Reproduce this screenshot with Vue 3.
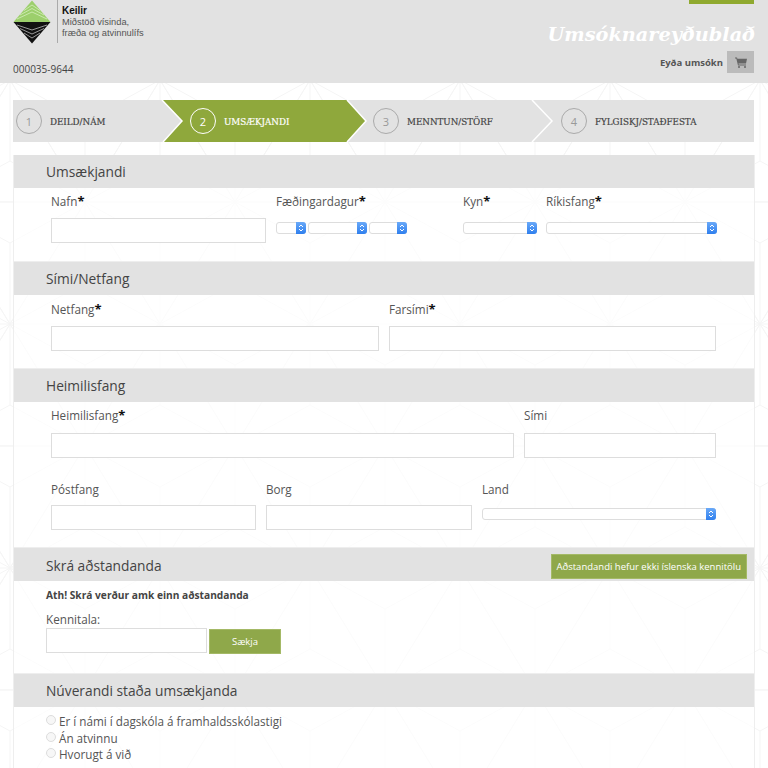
<template>
  <div class="page">
    <svg class="bg-pattern" width="768" height="768" aria-hidden="true">
      <defs>
        <pattern id="stars" width="150" height="244" patternUnits="userSpaceOnUse" x="85" y="-42">
          <g stroke="#f5f5f5" stroke-width="1" fill="none">
            <g v-for="c in starCentres" :key="c[0] + '-' + c[1]">
              <line v-for="p in starTargets" :key="p[0] + '-' + p[1]" :x1="c[0]" :y1="c[1]" :x2="c[0] + p[0]" :y2="c[1] + p[1]" />
            </g>
          </g>
        </pattern>
      </defs>
      <rect width="768" height="768" fill="url(#stars)" />
    </svg>

    <header class="top">
      <div class="top-left">
        <div class="brand">
          <svg class="logo" width="38" height="44" viewBox="0 0 38 44">
            <polygon points="0.5,22 19,0.5 37.5,22" fill="#9ccf6c" />
            <g fill="none" stroke="#d6efbd" stroke-width="0.8">
              <polyline points="4,19 19,12 34,19" />
              <polyline points="7,15 19,8.500 31,15" />
              <polyline points="11,10.500 19,5 27,10.500" />
            </g>
            <polygon points="0.5,22 19,43.500 37.500,22" fill="#111" />
            <g fill="none" stroke="#bbb" stroke-width="0.8">
              <polyline points="4,25 19,30 34,25" />
              <polyline points="7,28.500 19,34 31,28.500" />
              <polyline points="11,33 19,38 27,33" />
            </g>
          </svg>
          <div class="brand-text">
            <strong>Keilir</strong>
            <span>Miðstöð vísinda,</span>
            <span>fræða og atvinnulífs</span>
          </div>
        </div>
        <div class="number">000035-9644</div>
      </div>
      <div class="top-right">
        <div class="top-tab"></div>
        <h1>Umsóknareyðublað</h1>
        <div class="delete-row">
          <span>Eyða umsókn</span>
          <button class="cart" type="button">
            <svg width="12" height="11" viewBox="0 0 12 11">
              <path d="M0 .5h2l.4 1.300H12l-1 4.700H3.500l.2 1H11v1H3L1.300 1.500H0z" fill="#666" />
              <circle cx="4" cy="10" r="1" fill="#666" />
              <circle cx="10" cy="10" r="1" fill="#666" />
            </svg>
          </button>
        </div>
      </div>
    </header>

    <nav class="steps">
      <svg class="steps-art" width="741" height="42" viewBox="0 0 741 42">
        <polygon points="149,0 334,0 353,21 334,42 150,42 169,21" fill="#8fa83c" />
        <g fill="none" stroke="#fff" stroke-width="1.500">
          <polyline points="149,0 169,21 150,42" />
          <polyline points="334,0 353,21 334,42" />
          <polyline points="519,0 539,21 519,42" />
        </g>
      </svg>
      <div v-for="(s, i) in steps" :key="s" class="step" :class="{ active: i === 1 }">
        <span class="circle">{{ i + 1 }}</span>
        <span class="step-label">{{ s }}</span>
      </div>
    </nav>

    <main class="card">
      <section>
        <h2>Umsækjandi</h2>
        <div class="fields row-person">
          <div class="field">
            <label>Nafn<b>*</b></label>
            <input type="text" />
          </div>
          <div class="field">
            <label>Fæðingardagur<b>*</b></label>
            <div class="select-row dates">
              <div class="sel"><i><svg width="6" height="8" viewBox="0 0 6 8"><path d="M1 3l2-2 2 2M1 5l2 2 2-2" fill="none" stroke="#fff" /></svg></i></div>
              <div class="sel"><i><svg width="6" height="8" viewBox="0 0 6 8"><path d="M1 3l2-2 2 2M1 5l2 2 2-2" fill="none" stroke="#fff" /></svg></i></div>
              <div class="sel"><i><svg width="6" height="8" viewBox="0 0 6 8"><path d="M1 3l2-2 2 2M1 5l2 2 2-2" fill="none" stroke="#fff" /></svg></i></div>
            </div>
          </div>
          <div class="field">
            <label>Kyn<b>*</b></label>
            <div class="select-row">
              <div class="sel kyn"><i><svg width="6" height="8" viewBox="0 0 6 8"><path d="M1 3l2-2 2 2M1 5l2 2 2-2" fill="none" stroke="#fff" /></svg></i></div>
            </div>
          </div>
          <div class="field">
            <label>Ríkisfang<b>*</b></label>
            <div class="select-row">
              <div class="sel wide"><i><svg width="6" height="8" viewBox="0 0 6 8"><path d="M1 3l2-2 2 2M1 5l2 2 2-2" fill="none" stroke="#fff" /></svg></i></div>
            </div>
          </div>
        </div>
      </section>

      <section>
        <h2>Sími/Netfang</h2>
        <div class="fields row-contact">
          <div class="field">
            <label>Netfang<b>*</b></label>
            <input type="text" />
          </div>
          <div class="field">
            <label>Farsími<b>*</b></label>
            <input type="text" />
          </div>
        </div>
      </section>

      <section>
        <h2>Heimilisfang</h2>
        <div class="fields row-address">
          <div class="field">
            <label>Heimilisfang<b>*</b></label>
            <input type="text" />
          </div>
          <div class="field">
            <label>Sími</label>
            <input type="text" />
          </div>
        </div>
        <div class="fields row-city">
          <div class="field">
            <label>Póstfang</label>
            <input type="text" />
          </div>
          <div class="field">
            <label>Borg</label>
            <input type="text" />
          </div>
          <div class="field">
            <label>Land</label>
            <div class="select-row tight">
              <div class="sel wide"><i><svg width="6" height="8" viewBox="0 0 6 8"><path d="M1 3l2-2 2 2M1 5l2 2 2-2" fill="none" stroke="#fff" /></svg></i></div>
            </div>
          </div>
        </div>
      </section>

      <section>
        <div class="head-row">
          <h2>Skrá aðstandanda</h2>
          <button class="green no-kt" type="button">Aðstandandi hefur ekki íslenska kennitölu</button>
        </div>
        <div class="relative">
          <p class="note">Ath! Skrá verður amk einn aðstandanda</p>
          <label class="kt-label">Kennitala:</label>
          <div class="kt-row">
            <input type="text" />
            <button class="green fetch" type="button">Sækja</button>
          </div>
        </div>
      </section>

      <section>
        <h2>Núverandi staða umsækjanda</h2>
        <div class="radios">
          <label v-for="o in statusOptions" :key="o"><span class="radio"></span>{{ o }}</label>
        </div>
      </section>
    </main>
  </div>
</template>

<script setup>
const steps = ['DEILD/NÁM', 'UMSÆKJANDI', 'MENNTUN/STÖRF', 'FYLGISKJ/STAÐFESTA']
const statusOptions = ['Er í námi í dagskóla á framhaldsskólastigi', 'Án atvinnu', 'Hvorugt á við']

const starCentres = [[0, 0], [150, 0], [0, 244], [150, 244], [75, 122]]
const starTargets = [
  [150, 0], [-150, 0], [75, 122], [-75, 122], [75, -122], [-75, -122],
  [0, 81], [0, -81], [75, 41], [-75, 41], [75, -41], [-75, -41]
]
</script>

<style>
html, body {
  margin: 0;
  background: #fff;
  overflow: hidden;
}
</style>

<style scoped>
.page {
  position: relative;
  width: 768px;
  height: 768px;
  overflow: hidden;
  font-family: "Open Sans", sans-serif;
  color: #555;
}

.bg-pattern {
  position: absolute;
  top: 0;
  left: 0;
}

.top {
  position: relative;
  display: flex;
  justify-content: space-between;
  height: 83px;
  padding: 0 14px 0 13px;
  background: #e2e2e2;
}

.brand {
  display: flex;
  height: 44px;
}

.logo {
  margin-right: 6px;
}

.brand-text {
  display: flex;
  flex-direction: column;
  justify-content: center;
  box-sizing: border-box;
  height: 43px;
  padding: 2px 0 0 4px;
  border-left: 1px solid #aaa;
  font-family: "Liberation Sans", sans-serif;
  font-size: 9.300px;
  line-height: 11.500px;
  color: #555;
}

.brand-text strong {
  font-size: 10px;
  color: #111;
}

.number {
  margin-top: 18px;
  font-size: 10px;
  line-height: 14px;
  color: #444;
}

.top-right {
  display: flex;
  flex-direction: column;
  align-items: flex-end;
}

.top-tab {
  width: 65px;
  height: 4px;
  background: #8fa92f;
}

h1 {
  margin: 19px -1px 0 0;
  font-family: "DejaVu Serif", serif;
  font-size: 19.300px;
  font-style: italic;
  font-weight: 700;
  line-height: 24px;
  color: #fff;
}

.delete-row {
  display: flex;
  align-items: center;
  gap: 4px;
  margin-top: 4px;
  font-size: 9.500px;
  font-weight: 700;
  color: #555;
}

.cart {
  display: flex;
  align-items: center;
  justify-content: center;
  width: 27px;
  height: 22px;
  padding: 0;
  border: 0;
  background: #bbb;
}

.steps {
  position: relative;
  display: flex;
  width: 741px;
  height: 42px;
  margin: 17px 0 0 13px;
  background: #e2e2e2;
}

.steps-art {
  position: absolute;
  top: 0;
  left: 0;
}

.step {
  position: relative;
  display: flex;
  align-items: center;
  gap: 8px;
  box-sizing: border-box;
  font-family: "DejaVu Serif Condensed", "DejaVu Serif", serif;
  font-size: 9.700px;
  font-weight: 400;
  color: #444;
  -webkit-text-stroke: 0.2px currentColor;
}

.step:nth-child(2) { width: 149px; padding-left: 3px; }
.step:nth-child(3) { width: 185px; padding-left: 28px; }
.step:nth-child(4) { width: 185px; padding-left: 26px; }
.step:nth-child(5) { width: 222px; padding-left: 29px; }

.step.active {
  color: #fff;
}

.circle {
  display: flex;
  align-items: center;
  justify-content: center;
  box-sizing: border-box;
  width: 26px;
  height: 26px;
  border: 1.500px solid #aaa;
  border-radius: 50%;
  font-family: "Open Sans", sans-serif;
  font-size: 11px;
  font-weight: 400;
  color: #999;
  -webkit-text-stroke: 0;
}

.active .circle {
  border-color: #fff;
  color: #fff;
}

.card {
  position: relative;
  box-sizing: border-box;
  width: 742px;
  margin: 13px 0 0 13px;
  border-right: 1px solid #eee;
  border-left: 1px solid #eee;
  background: rgba(255, 255, 255, 0.7);
}

section {
  border-bottom: 1px solid #eee;
}

h2 {
  box-sizing: border-box;
  height: 33px;
  margin: 0;
  padding: 0 0 0 32px;
  background: #e2e2e2;
  font-size: 13.750px;
  font-weight: 400;
  line-height: 33px;
  color: #444;
}

.head-row h2 {
  line-height: 35px;
}

.fields {
  display: grid;
  padding-left: 37px;
}

.row-person {
  grid-template-columns: 225px 187px 83px 171px;
  height: 73px;
}

.row-contact {
  grid-template-columns: 338px 327px;
  height: 73px;
}

.row-address {
  grid-template-columns: 473px 192px;
  height: 73px;
}

.row-city {
  grid-template-columns: 215px 216px 234px;
  height: 72px;
}

label {
  font-size: 11.700px;
  color: #555;
}

label b {
  font-size: 13px;
  color: #111;
}

.field label {
  display: block;
  box-sizing: border-box;
  height: 31px;
  padding-top: 5px;
  line-height: 17px;
}

.row-person .field label {
  height: 30px;
  padding-top: 5px;
}

.row-contact .field label {
  padding-top: 6px;
}

.row-city .field label {
  height: 30px;
  padding-top: 6px;
}

input {
  display: block;
  box-sizing: border-box;
  height: 25px;
  border: 1px solid #ddd;
  background: #fff;
}

.field input {
  width: 100%;
}

.row-address .field:first-child input,
.row-contact .field:first-child input,
.row-city .field input {
  width: calc(100% - 10px);
}

.row-person .field input {
  width: 215px;
}

.select-row {
  display: flex;
  gap: 2px;
  margin-top: 4px;
}

.select-row.tight {
  margin-top: 0;
  padding-top: 3px;
}

.sel {
  position: relative;
  box-sizing: border-box;
  width: 74px;
  height: 12px;
  border: 1px solid #ddd;
  border-radius: 3px;
  background: #fff;
}

.sel i {
  position: absolute;
  top: -1px;
  right: -1px;
  display: flex;
  align-items: center;
  justify-content: center;
  width: 10px;
  height: 12px;
  border-radius: 0 3px 3px 0;
  background: linear-gradient(#6aa9f8, #2f7fee);
}

.dates .sel:nth-child(1) { width: 30px; }
.dates .sel:nth-child(2) { width: 59px; }
.dates .sel:nth-child(3) { width: 38px; }

.sel.wide {
  width: 171px;
}

.row-city .sel.wide {
  width: 234px;
}

.head-row {
  position: relative;
}

.green {
  border: 1px solid #a4b966;
  background: #8fa84a;
  color: #fff;
  font-family: "Open Sans", sans-serif;
}

.no-kt {
  position: absolute;
  top: 6px;
  right: 7px;
  height: 25px;
  padding: 0 5px;
  font-size: 9.500px;
}

.relative {
  height: 92px;
  padding-left: 32px;
}

.note {
  margin: 0;
  padding-top: 7px;
  font-size: 10.200px;
  font-weight: 700;
  line-height: 14px;
  color: #444;
}

.kt-label {
  display: block;
  margin: 9px 0 1px;
  line-height: 16px;
}

.kt-row {
  display: flex;
  align-items: flex-start;
  gap: 2px;
}

.kt-row input {
  width: 161px;
}

.fetch {
  width: 72px;
  height: 25px;
  margin-top: 1px;
  padding: 0;
  font-size: 9.500px;
}

.radios {
  display: flex;
  flex-direction: column;
  padding: 6px 0 30px 32px;
}

.radios label {
  display: flex;
  align-items: center;
  gap: 3px;
  height: 16.500px;
  font-size: 11.700px;
}

.radio {
  box-sizing: border-box;
  width: 10px;
  height: 10px;
  margin-top: -2px;
  border: 1px solid #ddd;
  border-radius: 50%;
  background: #f7f7f7;
}
</style>
